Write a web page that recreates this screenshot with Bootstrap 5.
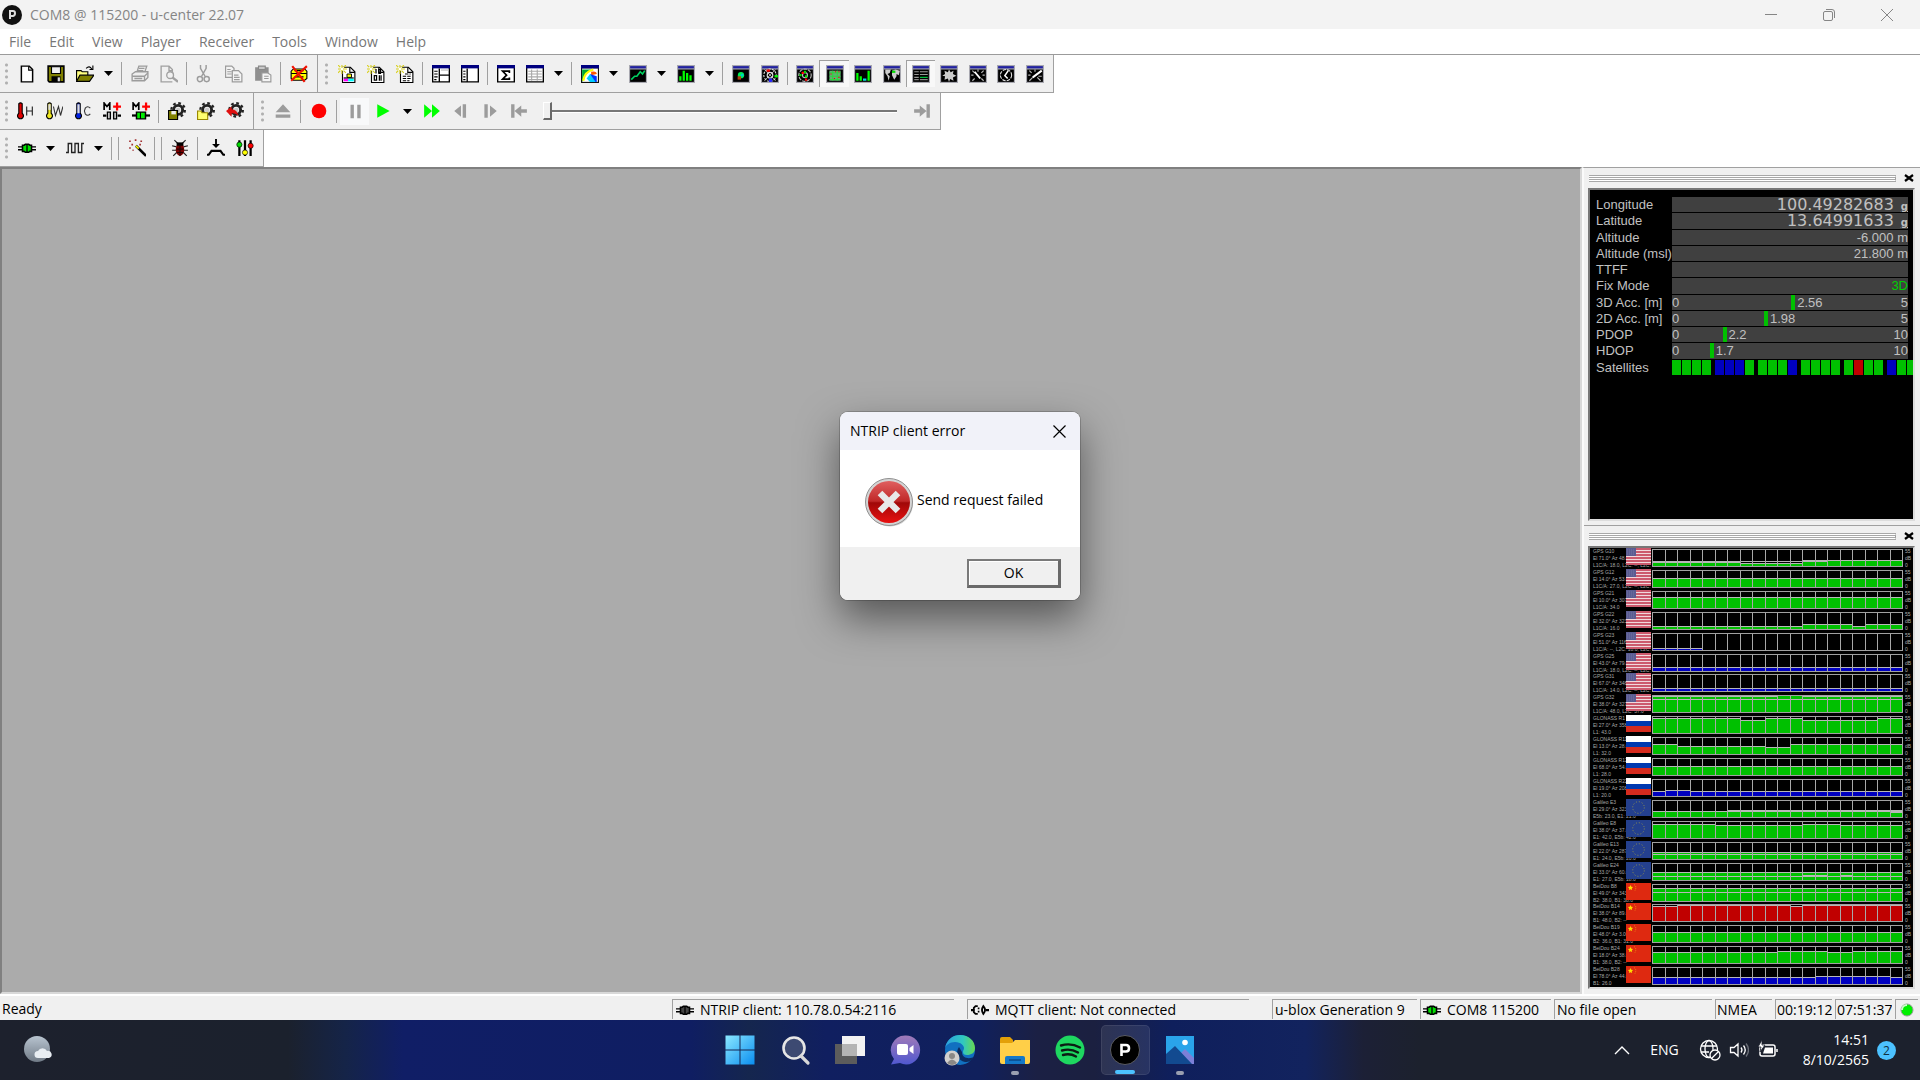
<!DOCTYPE html>
<html lang="en">
<head>
<meta charset="utf-8">
<meta name="viewport" content="width=device-width, initial-scale=1">
<title>COM8 @ 115200 - u-center 22.07</title>
<link href="https://cdn.jsdelivr.net/npm/bootstrap@5.3.0/dist/css/bootstrap.min.css" rel="stylesheet">
<style>
  body { font-family: "Open Sans", "Noto Sans", sans-serif; font-size: 14px; line-height: 20px; color: #000; background: #fff; }
  button { font: inherit; color: inherit; }
  svg { display: block; flex: none; }
  .title-strip { height: 29px; background: #f3f3f3; color: #858585; padding-left: 2px; }
  .win-btn { width: 58px; height: 29px; border: 0; background: none; color: #858585; display: flex; align-items: center; justify-content: center; padding: 0; }
  .menu-strip { height: 25px; padding-left: 9px; gap: 18px; }
  .menu-strip a { color: #777; text-decoration: none; }

  .bars { border-top: 1px solid #9b9b9b; }
  .bar-group { background: #f0f0f0; border-right: 1px solid #a0a0a0; border-bottom: 1px solid #a0a0a0; height: 37px; padding-right: 4px; }
  .bar-main .bar-group { height: 38px; }
  .grip { width: 3px; height: 24px; margin-left: 5px; margin-right: 4px; background: radial-gradient(circle, #b0b0b0 1px, transparent 2px) 0 0 / 3px 6px; }
  .grip-near { margin-right: 2px; }
  .grip-far { margin-left: 7px; }
  .tool { width: 29px; height: 27px; padding: 0; border: 0; background: none; display: flex; align-items: center; justify-content: center; }
  .tool.drop { width: 19px; }
  .tool.pressed { background: #f8f8f8; border-top: 1px solid #a0a0a0; border-left: 1px solid #a0a0a0; }
  .tool svg, .stat svg { width: 18px; height: 18px; }
  .tool.drop svg { width: 9px; height: 5px; }
  .split { width: 1px; height: 23px; background: #a0a0a0; margin: 0 3px; }
  .docks { width: 258px; }
  .docks .tool { flex: 1 1 0; }
  .seek { width: 374px; padding: 0 10px 0 10px; }
  .seek input { width: 100%; height: 20px; appearance: none; background: none; margin: 0; display: block; }
  .seek input::-webkit-slider-runnable-track { height: 3px; background: #777; border-bottom: 1px solid #fff; }
  .seek input::-webkit-slider-thumb { appearance: none; width: 9px; height: 18px; margin-top: -8px; background: #f0f0f0; border: 1px solid #fff; border-right: 2px solid #696969; border-bottom: 2px solid #696969; }

  .main-area { min-height: 0; }
  .workspace { background: #ababab; border: 2px solid #808080; border-right-color: #d8d8d8; border-bottom-color: #d8d8d8; }
  .side { width: 338px; background: #f0f0f0; border-left: 2px solid #fafafa; border-top: 1px solid #a0a0a0; }
  .dock-head { height: 20px; padding-left: 5px; padding-right: 3px; }
  .dock-grip { height: 7px; border-top: 3px double #a8a8a8; border-bottom: 3px double #a8a8a8; border-right: 1px solid #a0a0a0; background: #fff; }
  .dock-close { width: 17px; height: 17px; border: 0; background: none; padding: 0; display: flex; align-items: center; justify-content: center; }
  .screen { background: #000; border: 2px solid #777; border-right-color: #ddd; border-bottom-color: #ddd; margin-left: 4px; margin-right: 5px; overflow: hidden; }
  .screen-data { height: 333px; }
  .dock-line { border-bottom: 1px solid #a0a0a0; }

  .readings { display: grid; grid-template-columns: 76px 1fr; grid-template-rows: repeat(11, minmax(0, 1fr)); height: 179px; margin: 7px 0 0 6px; font-family: "Liberation Sans", Arial, sans-serif; font-size: 13px; line-height: 15px; color: #c0c0c0; }
  .reading-name, .reading { white-space: nowrap; }
  .reading { background: #404040; margin-bottom: 1px; margin-right: 5px; text-align: right; position: relative; }
  .wide-num { font-family: "DejaVu Sans", Verdana, sans-serif; font-size: 16px; }
  .wide-num b { font-size: 10px; line-height: 10px; margin-left: 7px; text-decoration: underline; }
  .fixed-3d { color: #00d000; }
  .mark-pos { position: absolute; top: 0; border-left: 4px solid #00c000; padding-left: 2px; height: 15px; }
  .sat-strip { display: flex; gap: 4px; margin-bottom: 1px; overflow: hidden; }
  .sat-strip span { display: flex; gap: 1px; flex: none; }
  .sat-strip i { width: 9px; background: #00c000; }
  .sat-strip i.used-b { background: #0000c0; }
  .sat-strip i.used-r { background: #c00000; }

  .signals { display: flex; flex-direction: column; height: 439px; }
  .sig { flex: 1 1 0; min-height: 0; display: flex; }
  .sig-text { width: 33px; flex: none; margin-left: 3px; font: 5px/7px "Liberation Sans", Arial, sans-serif; color: #a8a8a8; white-space: nowrap; }
  .sig-flag { width: 25px; height: 17px; margin-right: 1px; position: relative; }
  .sig-plot { height: 18px; width: 251px; margin-top: 1px; position: relative; background: #000; }
  .sig-unit { width: 9px; flex: none; padding-left: 2px; font: 5px/7px "Liberation Sans", Arial, sans-serif; color: #b0b0b0; }

  .status { height: 26px; background: #f0f0f0; border-top: 2px solid #fff; gap: 3px; padding: 3px 2px 1px; }
  .stat { height: 20px; border-top: 1px solid #a0a0a0; border-left: 1px solid #a0a0a0; padding-left: 3px; display: flex; align-items: center; gap: 6px; white-space: nowrap; overflow: hidden; }
  .stat-client { width: 282px; margin-right: 10px; }
  .stat-gen { width: 145px; margin-left: 10px; padding-left: 2px; }
  .stat-port { width: 131px; padding-left: 2px; }
  .stat-file { width: 158px; padding-left: 2px; }
  .stat-time { width: 57px; padding-left: 1px; }
  .stat-led { width: 23px; padding-left: 2px; }

  .taskbar { height: 60px; display: grid; grid-template-columns: 1fr auto 1fr; align-items: center; color: #fff;
    background: linear-gradient(90deg, #1d212d 0, #1b212d 15%, #152448 18%, #101e66 21%, #0f1e62 36%, #15264e 39%, #101f60 43%, #10205c 51%, #1b2044 54%, #1b2040 57%, #0f1f5c 61%, #12235e 68%, #1c2036 71%, #1c212d 74%, #1c212d 100%); }
  .app { width: 55px; height: 52px; border: 0; background: none; padding: 0; display: flex; align-items: center; justify-content: center; position: relative; }
  .app svg { width: 32px; height: 32px; }
  .app.weather { width: 75px; }
  .app.active { width: 49px; height: 50px; margin: 0 3px; background: rgba(255,255,255,.09); border: 1px solid rgba(255,255,255,.08); border-radius: 5px; }
  .app.running::after { content: ""; position: absolute; bottom: 1px; width: 8px; height: 4px; border-radius: 2px; background: #9a9fb0; }
  .app.active::after { bottom: 0; width: 20px; background: #4cc2ff; }
  .tray { padding-right: 24px; }
  .tray button { border: 0; background: none; padding: 0; color: #fff; margin-right: 20px; }
  .clock { text-align: right; margin-left: 4px; }
  .notice { width: 19px; height: 19px; border-radius: 50%; background: #4cc2ff; color: #103040; font-size: 12px; line-height: 19px; text-align: center; }

  .msgbox { top: 412px; width: 240px; border-radius: 8px; overflow: hidden; background: #fff; box-shadow: 0 0 0 1px rgba(0,0,0,.18), 0 18px 40px rgba(0,0,0,.5); z-index: 5; }
  .msg-title { height: 38px; background: #f1f2f9; padding-left: 10px; }
  .msg-title .win-btn { width: 42px; }
  .msg-main { height: 97px; padding: 7px 0 0 24px; gap: 3px; }
  .msg-main span { padding-bottom: 4px; }
  .msg-foot { background: #f0f0f0; height: 53px; padding-right: 19px; }
  .ok-btn { width: 94px; height: 29px; border: 2px solid #7a7a7a; border-right: 3px solid #696969; border-bottom: 3px solid #696969; background: #f0f0f0; box-shadow: inset 1px 1px #fff; padding: 0; }
</style>
</head>
<body>

<svg width="0" height="0" class="position-absolute" aria-hidden="true">
  <defs>
    <symbol id="caret" viewBox="0 0 9 5"><path d="M0 0h9L4.500 5z"/></symbol>
    <symbol id="new" viewBox="0 0 16 16"><path d="M3 1h7l3 3v11H3z" fill="#fff" stroke="#000" stroke-width="1.300"/><path d="M9.500 1v3.500H13" fill="none" stroke="#000"/></symbol>
    <symbol id="save" viewBox="0 0 16 16"><path d="M1 1h14v14H2l-1-1z" fill="#808000" stroke="#000" stroke-width="1.400"/><path d="M4 1.500h8v6H4z" fill="#f0f0f0" stroke="#000"/><path d="M4 10h8v5H4z"/><path d="M9.500 11h2v3.500h-2z" fill="#ddd"/></symbol>
    <symbol id="open" viewBox="0 0 16 16"><path d="M.5 14V5h4l1 1h5v3" fill="#ffff80" stroke="#000"/><path d="M.5 14.500 3.500 9H16l-4 5.500z" fill="#808000" stroke="#000"/><path d="M9 3q3-3 5 .5M15 .5V4h-3" fill="none" stroke="#000"/></symbol>
    <symbol id="print" viewBox="0 0 16 16"><g fill="#eee" stroke="#9c9c9c" stroke-width="1.200"><path d="M5 7 7 1h7l-2 6z"/><path d="M1 8l3-2h11v5l-3 3H1z"/><path d="M1 10h11l3-3M12 10v4M3 12h7M7 3h5M6 5h5"/></g></symbol>
    <symbol id="preview" viewBox="0 0 16 16"><g fill="none" stroke="#a0a0a0" stroke-width="1.200"><path d="M11 15H1V1h7l3 3v3M8 1v4h3"/><circle cx="9" cy="9" r="3"/><path d="m11 11 5 4" stroke-width="2.200"/></g></symbol>
    <symbol id="cut" viewBox="0 0 16 16"><g fill="none" stroke="#9c9c9c" stroke-width="1.300"><path d="M4 0v3l4 7M9 0v3L5 10"/><circle cx="3.500" cy="12.500" r="2.300"/><circle cx="9.500" cy="12.500" r="2.300"/></g></symbol>
    <symbol id="copy" viewBox="0 0 16 16"><g fill="#f4f4f4" stroke="#9c9c9c" stroke-width="1.100"><path d="M.5 1H6l2 2v8H.5z"/><path d="M6.500 5H12l3 3v7H6.500z"/><path d="M2 4h3M2 6h4M2 8h4M8 9h4M8 11h5M8 13h5"/></g></symbol>
    <symbol id="paste" viewBox="0 0 16 16"><path d="M1 2h12v12H1z" fill="#8f8f8f"/><path d="M4 1h6v3H4z" fill="#c8c8c8" stroke="#888"/><path d="M7 7h5l3 2v6H7z" fill="#f4f4f4" stroke="#999"/><path d="M9 10h4M9 12h4" stroke="#999"/></symbol>
    <symbol id="nomsg" viewBox="0 0 16 16"><path d="M3 3.500h10l2 2V12l-2 1.500H3L1 12V5.500z" fill="#ff0" stroke="#000"/><path d="M1 7.500h14M4 5h8M4 10.500h8" stroke="#000"/><path d="M2 1l11 14M15 1 1 14" stroke="#f01000" stroke-width="1.900"/></symbol>
    <symbol id="page" viewBox="0 0 16 16"><path d="M4 2h7l4 4v9.500H4z" fill="#fff" stroke="#000"/><path d="M10.500 2v4.500H15" fill="none" stroke="#000"/><path d="M0 0l7 7M7 0 0 7M3.500-1v9M-1 3.500h9" stroke="#d8d020"/><path d="M2 2l3 3M5 2 2 5" stroke="#fff"/></symbol>
    <symbol id="new1" viewBox="0 0 16 16"><use href="#page"/><path d="M8 8h4v3H8z" fill="#ff0" stroke="#000" stroke-width=".8"/><path d="M5 12h4v2.500H5z" fill="#f0f"/><path d="M9 12h5v2.500H9z" fill="#0ff"/><path d="M5 11.500h9" stroke="#000"/></symbol>
    <symbol id="new2" viewBox="0 0 16 16"><use href="#page"/><path d="M8 3.500v4M10.500 4h1.500v3.500h-1.500zM6.500 9.500h2v4h-2zM11 9v5M12.500 9v5" fill="none" stroke="#000" stroke-width="1.100"/></symbol>
    <symbol id="new3" viewBox="0 0 16 16"><use href="#page"/><path d="M8 8h5M6 10h8M6 12h3M10 12h3M6 14h6" stroke="#000" stroke-dasharray="3 1"/></symbol>
    <symbol id="pane" viewBox="0 0 16 16"><path d="M.6 1h14.800v14H.6z" fill="#fff" stroke="#000" stroke-width="1.200"/><path d="M0 0h16v3H0z" fill="#000080"/></symbol>
    <symbol id="split1" viewBox="0 0 16 16"><use href="#pane"/><path d="M6.500 3v12M6.500 9H16" stroke="#000" stroke-width="1.200"/><path d="M2 5.500h3M2 8h3M2 10.500h3M2 13h2" stroke="#000"/><path d="M8 4.500h7" stroke="#bbb"/></symbol>
    <symbol id="split2" viewBox="0 0 16 16"><use href="#pane"/><path d="M5.500 3v12" stroke="#000" stroke-width="1.200"/><path d="M2 5.500h2M2 8h2M2 10.500h2M2 13h2" stroke="#000"/></symbol>
    <symbol id="sigma" viewBox="0 0 16 16"><use href="#pane"/><path d="M11 7V5.500H5L8.500 9 5 12.500h6V11" fill="none" stroke="#000" stroke-width="1.500"/></symbol>
    <symbol id="grid" viewBox="0 0 16 16"><use href="#pane"/><path d="M2 5.500h12M2 8h12M2 10.500h12M2 13h12M5 4v10M10 4v10" stroke="#aaa"/></symbol>
    <symbol id="dark" viewBox="0 0 16 16"><path d="M0 0h16v16H0z" fill="#a8a8b0"/><path d="M1 1h14v2H1z" fill="#2222a0"/><path d="M1 4h14v11H1z"/></symbol>
    <symbol id="map" viewBox="0 0 16 16"><path d="M0 0h16v16H0z" fill="#111"/><path d="M1 3h14v12H1z" fill="#fff"/><path d="M0 0h16v3H0z" fill="#000080"/><path d="M1 4h8L4 9l-3 6z" fill="#0a3"/><path d="M2 14q1-8 9-10" fill="none" stroke="#ff0" stroke-width="2"/><path d="M9 6q5-1 5 2l-5 1z" fill="#f50"/><path d="M8 8l6 2v5h-4z" fill="#03f"/><path d="M5 12l3-4 5 7H8z" fill="#0cf"/></symbol>
    <symbol id="line" viewBox="0 0 16 16"><use href="#dark"/><path d="M2 13l3-3h2l3-4 2 2 2-3" fill="none" stroke="#00d060" stroke-width="1.400"/></symbol>
    <symbol id="hist" viewBox="0 0 16 16"><use href="#dark"/><path d="M2 14v-4h2v4zM5 14V5h2v9zM8 14V7h2v7zM11 14V9h2v5z" fill="#0f0"/></symbol>
    <symbol id="cam" viewBox="0 0 16 16"><use href="#dark"/><circle cx="8" cy="9" r="2.800" fill="#0e5"/><path d="M5 10h3v3H5z" fill="#b04010"/><circle cx="9" cy="9" r="1.200" fill="#0cc"/></symbol>
    <symbol id="radar" viewBox="0 0 16 16"><use href="#dark"/><g fill="none" stroke="#ddd"><circle cx="8" cy="9" r="5.500" stroke-dasharray="2 1"/><circle cx="8" cy="9" r="2.500"/><path d="M3 4l10 10M13 4 3 14" stroke-width=".7"/></g><path d="M5 4h3v2H5z" fill="#f00"/><path d="M7 12h3v3H7z" fill="#22f"/><path d="M12 9h3v2h-3z" fill="#0f0"/></symbol>
    <symbol id="radar2" viewBox="0 0 16 16"><use href="#dark"/><g fill="none" stroke="#bbb"><circle cx="8" cy="9" r="5.500" stroke-dasharray="3 1"/><circle cx="8" cy="9" r="2.200"/></g><path d="M7 5h2v2H7zM3 8h2v2H3zM8 9h2v2H8z" fill="#0d0"/><path d="M5 6h2v2H5zM8 12h2v2H8z" fill="#f00"/></symbol>
    <symbol id="matrix" viewBox="0 0 16 16"><use href="#dark"/><path d="M3 5h10v9H3z" fill="#6a7"/><path d="M3 7h10M3 10h10M3 13h10M6 5v9M10 5v9" stroke="#2d3" stroke-width=".8"/><path d="M4 8h1M8 6h1M11 11h1M7 12h1M11 6h1" stroke="#e00"/></symbol>
    <symbol id="hist2" viewBox="0 0 16 16"><use href="#dark"/><path d="M2 14V7h2v7zM5 14v-4h2v4zM12 14V5h2v9z" fill="#0f0"/><path d="M8 14v-2h3v2z" fill="#0dd"/></symbol>
    <symbol id="world" viewBox="0 0 16 16"><use href="#dark"/><path d="M2 4h5l-1 3-2 1 2 2-1 4-1-4-2-3zM8 5l3-1 4 1-1 4-2-1v2l-2 3-2-4z" fill="#ccc"/><path d="M8 5h3v2H8z" fill="#0d0"/></symbol>
    <symbol id="lines" viewBox="0 0 16 16"><use href="#dark"/><path d="M2 6h4M7 6h7M2 8.500h4M7 8.500h7M2 11h4" stroke="#999" stroke-width=".9"/><path d="M7 11h7" stroke="#0c4"/><path d="M2 13h4M7 13h7" stroke="#888" stroke-width=".9"/></symbol>
    <symbol id="rose" viewBox="0 0 16 16"><use href="#dark"/><path d="m8 4 1.500 2.500L12 5l-.5 3 3 1.500-3 1.500.5 3-3-1.500L8 15l-1-3-3 1 .5-3L2 9.500 4.500 8 4 5l3 1.500z" fill="#ccc"/></symbol>
    <symbol id="gauge" viewBox="0 0 16 16"><use href="#dark"/><path d="M3 5l2 2M13 5l-2 2M8 4v2M2 9h2M14 9h-2M3 14l2-2M13 14l-2-2" stroke="#bbb"/><path d="m5 6 5 6" stroke="#fff" stroke-width="1.700"/></symbol>
    <symbol id="watch" viewBox="0 0 16 16"><use href="#dark"/><circle cx="8" cy="9" r="5" fill="none" stroke="#ddd" stroke-dasharray="3 1"/><path d="M10 5 7 9.500 9.500 12" fill="none" stroke="#fff" stroke-width="1.400"/></symbol>
    <symbol id="gauge2" viewBox="0 0 16 16"><use href="#dark"/><path d="M3 5l2 2M8 4v2M2 9h2M14 10h-3M3 14l3-3M13 14l-3-3" stroke="#bbb"/><path d="M14 5 6 11" stroke="#fff" stroke-width="1.700"/></symbol>
    <symbol id="therm" viewBox="0 0 16 16"><path d="M2.500 1.500q1.500-1.500 3 0V10q2 2 .5 4-2 1.800-4 0-1.500-2 .5-4z" fill="currentColor" stroke="#000"/></symbol>
    <symbol id="th" viewBox="0 0 16 16"><use href="#therm" color="#e00000"/><path d="M9.500 4v8M14.500 4v8M9.500 8h5" stroke="#222"/></symbol>
    <symbol id="tw" viewBox="0 0 16 16"><use href="#therm" color="#f0e820"/><path d="M3 2h2v5H3z" fill="#ddd"/><path d="m7.500 4 1.800 8L12 4l1.800 8L16 4" fill="none" stroke="#333"/></symbol>
    <symbol id="tc" viewBox="0 0 16 16"><use href="#therm" color="#0020e0"/><path d="M3 2h2v8H3z" fill="#ddd"/><path d="M14.500 5.500q-2.500-2.500-4.500 0-1.500 2.500 0 5 2 2.500 4.500 0" fill="none" stroke="#333"/></symbol>
    <symbol id="mplus" viewBox="0 0 16 16"><path d="M1 7V1l2.500 3L6 1v6" fill="none" stroke="#000" stroke-width="1.500"/><path d="M9 4h7M12.500.5v7" stroke="#f00" stroke-width="2"/></symbol>
    <symbol id="m1" viewBox="0 0 16 16"><use href="#mplus"/><path d="M0 12h3M13 12h3" stroke="#000" stroke-width="2"/><path d="M6.500 9H4v6h2.500zM9.500 9H12v6H9.500z" fill="#fff" stroke="#000" stroke-width="1.300"/></symbol>
    <symbol id="m2" viewBox="0 0 16 16"><use href="#mplus"/><path d="M0 12h16" stroke="#000" stroke-width="2"/><path d="M4 9h8v6H4z" fill="#0e0" stroke="#000" stroke-width="1.300"/><path d="M7.500 9v6" stroke="#000"/></symbol>
    <symbol id="cog" viewBox="0 0 16 16"><circle cx="9" cy="7" r="4" fill="none" stroke="#222" stroke-width="2.600"/><circle cx="9" cy="7" r="6" fill="none" stroke="#222" stroke-width="2" stroke-dasharray="2.400 2.300"/><circle cx="9" cy="7" r="2" fill="#ccc"/></symbol>
    <symbol id="c1" viewBox="0 0 16 16"><use href="#cog"/><path d="M.5 7.500h8v8h-8z" fill="#808000" stroke="#000"/><path d="M3 8h4v3H3z" fill="#eee"/></symbol>
    <symbol id="c2" viewBox="0 0 16 16"><use href="#cog"/><path d="M.5 8h3l1 1.500h5v6h-9z" fill="#ffff70" stroke="#998800"/></symbol>
    <symbol id="c3" viewBox="0 0 16 16"><use href="#cog"/><path d="M0 8l5-4v2.500q5 0 6 6-2-3-6-2.500V13z" fill="#e01010"/></symbol>
    <symbol id="eject" viewBox="0 0 16 16"><path d="M8 2l6.500 7h-13zM1.500 11h13v3h-13z" fill="#9c9c9c"/></symbol>
    <symbol id="rec" viewBox="0 0 16 16"><circle cx="8" cy="8" r="6.500" fill="#f00"/></symbol>
    <symbol id="pause" viewBox="0 0 16 16"><path d="M4 2.500h3v12H4zM10 2.500h3v12h-3z" fill="#9c9c9c"/></symbol>
    <symbol id="play" viewBox="0 0 16 16"><path d="M2 2l11 6-11 6z" fill="#0f0"/></symbol>
    <symbol id="ff" viewBox="0 0 16 16"><path d="M1 2l7 6-7 6zM8 2l7 6-7 6z" fill="#0f0"/></symbol>
    <symbol id="sb" viewBox="0 0 16 16"><path d="M8 3v10L2 8zM9.500 2h3v12h-3z" fill="#9c9c9c"/></symbol>
    <symbol id="sf" viewBox="0 0 16 16"><path d="M8 3v10l6-5zM3 2h3v12H3z" fill="#9c9c9c"/></symbol>
    <symbol id="first" viewBox="0 0 16 16"><path d="M1 2h3v12H1zM4 8l6-5v3.500h5v3h-5V13z" fill="#9c9c9c"/></symbol>
    <symbol id="last" viewBox="0 0 16 16"><path d="M12 2h3v12h-3zM12 8 6 3v3.500H1v3h5V13z" fill="#9c9c9c"/></symbol>
    <symbol id="plug" viewBox="0 0 16 16"><path d="M0 7h4M0 9.500h4M12 7h4M12 9.500h4" stroke="#000" stroke-width="1.300"/><path d="M4 5.500h1.500l1-.8h3l1 .8H12v5.500h-1.500l-1 .8h-3l-1-.8H4z" fill="currentColor" stroke="#000" stroke-width="1.400"/><path d="M8 5v6.500" stroke="#000" stroke-width="1.200"/></symbol>
    <symbol id="unplug" viewBox="0 0 16 16"><path d="M0 8h3M13 8h3" stroke="#000" stroke-width="2"/><path d="M6 4.500H4L2.500 6v4L4 11.500h2M6 6.500h1.500M6 9.500h1.500" fill="none" stroke="#000" stroke-width="1.600"/><path d="M11 4.500q3 3.500 0 7-2.500-3.500 0-7z" fill="none" stroke="#000" stroke-width="1.600"/></symbol>
    <symbol id="wave" viewBox="0 0 16 16"><path d="M0 12h2V4h3v8h3V4h3v8h3V4h2" fill="none" stroke="#222" stroke-width="1.200"/></symbol>
    <symbol id="wand" viewBox="0 0 16 16"><path d="m7 6 9 9" stroke="#000" stroke-width="2.200"/><path d="m7 6 2.500 2.500" stroke="#ff0" stroke-width="1.500"/><path d="M1 2h1.500M6 1h1.500M11 2h1.500M3 5h1.500M1 8h1.500M10 5h1.500M4 10h1" stroke="#a03030" stroke-width="1.400"/></symbol>
    <symbol id="bug" viewBox="0 0 16 16"><path d="M3 1l3 3M13 1l-3 3M1 6l4 1M15 6l-4 1M1 10h14M2 15l3-3M14 15l-3-3" stroke="#222"/><ellipse cx="8" cy="9.500" rx="3.800" ry="5.500" fill="#700"/><path d="M5 3h6v3H5z"/><path d="M8 6v9M5 9h6M5 12h6" stroke="#200"/></symbol>
    <symbol id="base" viewBox="0 0 16 16"><path d="M8 0v6" stroke="#000" stroke-width="1.700"/><path d="M4.500 4.500h7L8 8z"/><path d="M0 14h1.500L4 10.500h8l2.500 3.500H16" fill="none" stroke="#000" stroke-width="1.900"/></symbol>
    <symbol id="mixer" viewBox="0 0 16 16"><path d="M3 1v14M8 1v14M13 1v14" stroke="#000" stroke-width="2"/><circle cx="3" cy="5" r="2.300" fill="#0d0" stroke="#000" stroke-width=".6"/><circle cx="8" cy="12" r="2.300" fill="#ff0" stroke="#000" stroke-width=".6"/><circle cx="13" cy="6" r="2.300" fill="#f00" stroke="#000" stroke-width=".6"/></symbol>
    <symbol id="xmark" viewBox="0 0 10 10"><path d="M1 2l8 6M9 2 1 8" stroke="#000" stroke-width="2.200"/></symbol>

    <symbol id="flag-us" viewBox="0 0 25 17" preserveAspectRatio="none"><path d="M0 0h25v17H0z" fill="#f0d8dc"/><path d="M0 1h25M0 4h25M0 7h25M0 10h25M0 13h25M0 16h25" stroke="#c03048" stroke-width="1.400"/><path d="M0 0h10v8H0z" fill="#5a5c92"/><path d="M1 2h8M1 4h8M1 6h8" stroke="#8486b0" stroke-width=".6" stroke-dasharray="1 1"/></symbol>
    <symbol id="flag-ru" viewBox="0 0 25 17" preserveAspectRatio="none"><path d="M0 0h25v6H0z" fill="#fff"/><path d="M0 6h25v5H0z" fill="#0039b0"/><path d="M0 11h25v6H0z" fill="#d52b1e"/></symbol>
    <symbol id="flag-eu" viewBox="0 0 25 17" preserveAspectRatio="none"><path d="M0 0h25v17H0z" fill="#24408e"/><circle cx="12.500" cy="8.500" r="5.800" fill="none" stroke="#8f914e" stroke-dasharray="1 2"/></symbol>
    <symbol id="flag-cn" viewBox="0 0 25 17" preserveAspectRatio="none"><path d="M0 0h25v17H0z" fill="#de2910"/><path d="m4.500 2 .8 1.700 1.800.2-1.300 1.300.3 1.900-1.600-.9-1.600.9.3-1.900L1.900 3.900l1.800-.2z" fill="#ffde00"/><path d="M8 1.500q3 2 1 6" fill="none" stroke="#f39010" stroke-dasharray="1 1"/></symbol>
  </defs>
</svg>

<div class="d-flex flex-column vh-100 position-relative overflow-hidden">

  <header class="title-strip d-flex align-items-center">
    <svg width="20" height="20" viewBox="0 0 20 20" aria-hidden="true"><circle cx="10" cy="10" r="10" fill="#111"/><path d="M8 14V6h3q2 0 2 2.300T11 11H8" fill="none" stroke="#ddd" stroke-width="2"/></svg>
    <span class="ms-2 flex-grow-1">COM8 @ 115200 - u-center 22.07</span>
    <button class="win-btn" aria-label="Minimize"><svg width="12" height="12" viewBox="0 0 12 12"><path d="M0 5.500h12" stroke="currentColor"/></svg></button>
    <button class="win-btn" aria-label="Restore"><svg width="12" height="12" viewBox="0 0 12 12" fill="none" stroke="currentColor"><rect x=".5" y="2.500" width="9" height="9" rx="1.500"/><path d="M3 .5h6q2.500 0 2.500 2.500v6"/></svg></button>
    <button class="win-btn me-1" aria-label="Close"><svg width="12" height="12" viewBox="0 0 12 12" stroke="currentColor"><path d="m0 0 12 12M12 0 0 12"/></svg></button>
  </header>

  <nav class="menu-strip d-flex align-items-center" aria-label="Menu">
    <a href="#">File</a><a href="#">Edit</a><a href="#">View</a><a href="#">Player</a><a href="#">Receiver</a><a href="#">Tools</a><a href="#">Window</a><a href="#">Help</a>
  </nav>

  <div class="bars">
    <div class="bar-main d-flex">
      <div class="bar-group d-flex align-items-center">
        <span class="grip"></span>
        <button class="tool" aria-label="New"><svg><use href="#new"/></svg></button>
        <button class="tool" aria-label="Save"><svg><use href="#save"/></svg></button>
        <button class="tool" aria-label="Open"><svg><use href="#open"/></svg></button>
        <button class="tool drop" aria-label="Recent files"><svg><use href="#caret"/></svg></button>
        <span class="split"></span>
        <button class="tool" aria-label="Print"><svg><use href="#print"/></svg></button>
        <button class="tool" aria-label="Print preview"><svg><use href="#preview"/></svg></button>
        <span class="split"></span>
        <button class="tool" aria-label="Cut"><svg><use href="#cut"/></svg></button>
        <button class="tool" aria-label="Copy"><svg><use href="#copy"/></svg></button>
        <button class="tool" aria-label="Paste"><svg><use href="#paste"/></svg></button>
        <span class="split"></span>
        <button class="tool" aria-label="Delete messages"><svg><use href="#nomsg"/></svg></button>
      </div>
      <div class="bar-group d-flex align-items-center">
        <span class="grip grip-far"></span>
        <button class="tool" aria-label="New packet view"><svg><use href="#new1"/></svg></button>
        <button class="tool" aria-label="New binary view"><svg><use href="#new2"/></svg></button>
        <button class="tool" aria-label="New text view"><svg><use href="#new3"/></svg></button>
        <span class="split"></span>
        <button class="tool" aria-label="Messages view"><svg><use href="#split1"/></svg></button>
        <button class="tool" aria-label="Configuration view"><svg><use href="#split2"/></svg></button>
        <span class="split"></span>
        <button class="tool" aria-label="Statistic view"><svg><use href="#sigma"/></svg></button>
        <button class="tool" aria-label="Table view"><svg><use href="#grid"/></svg></button>
        <button class="tool drop" aria-label="Table views"><svg><use href="#caret"/></svg></button>
        <span class="split"></span>
        <button class="tool" aria-label="Map view"><svg><use href="#map"/></svg></button>
        <button class="tool drop" aria-label="Map views"><svg><use href="#caret"/></svg></button>
        <button class="tool" aria-label="Chart view"><svg><use href="#line"/></svg></button>
        <button class="tool drop" aria-label="Chart views"><svg><use href="#caret"/></svg></button>
        <button class="tool" aria-label="Histogram view"><svg><use href="#hist"/></svg></button>
        <button class="tool drop" aria-label="Histogram views"><svg><use href="#caret"/></svg></button>
        <span class="split"></span>
        <button class="tool" aria-label="Camera view"><svg><use href="#cam"/></svg></button>
        <button class="tool" aria-label="Deviation map"><svg><use href="#radar"/></svg></button>
        <span class="split"></span>
        <div class="docks d-flex">
          <button class="tool" aria-label="Sky view"><svg><use href="#radar2"/></svg></button>
          <button class="tool pressed" aria-label="Satellite signals" aria-pressed="true"><svg><use href="#matrix"/></svg></button>
          <button class="tool" aria-label="Satellite levels"><svg><use href="#hist2"/></svg></button>
          <button class="tool" aria-label="World map"><svg><use href="#world"/></svg></button>
          <button class="tool pressed" aria-label="Data" aria-pressed="true"><svg><use href="#lines"/></svg></button>
          <button class="tool" aria-label="Compass"><svg><use href="#rose"/></svg></button>
          <button class="tool" aria-label="Speed meter"><svg><use href="#gauge"/></svg></button>
          <button class="tool" aria-label="Clock"><svg><use href="#watch"/></svg></button>
          <button class="tool" aria-label="Altitude meter"><svg><use href="#gauge2"/></svg></button>
        </div>
      </div>
    </div>

    <div class="d-flex">
      <div class="bar-group d-flex align-items-center">
        <span class="grip grip-near"></span>
        <button class="tool" aria-label="Hotstart"><svg><use href="#th"/></svg></button>
        <button class="tool" aria-label="Warmstart"><svg><use href="#tw"/></svg></button>
        <button class="tool" aria-label="Coldstart"><svg><use href="#tc"/></svg></button>
        <button class="tool" aria-label="Aiding off"><svg><use href="#m1"/></svg></button>
        <button class="tool" aria-label="Aiding on"><svg><use href="#m2"/></svg></button>
        <span class="split"></span>
        <button class="tool" aria-label="Save configuration"><svg><use href="#c1"/></svg></button>
        <button class="tool" aria-label="Load configuration"><svg><use href="#c2"/></svg></button>
        <button class="tool" aria-label="Revert configuration"><svg><use href="#c3"/></svg></button>
      </div>
      <div class="bar-group d-flex align-items-center">
        <span class="grip grip-far"></span>
        <button class="tool" aria-label="Eject"><svg><use href="#eject"/></svg></button>
        <span class="split"></span>
        <button class="tool" aria-label="Record"><svg><use href="#rec"/></svg></button>
        <span class="split"></span>
        <button class="tool bg-light" aria-label="Pause"><svg><use href="#pause"/></svg></button>
        <button class="tool" aria-label="Play"><svg><use href="#play"/></svg></button>
        <button class="tool drop" aria-label="Play speed"><svg><use href="#caret"/></svg></button>
        <button class="tool" aria-label="Fast forward"><svg><use href="#ff"/></svg></button>
        <button class="tool" aria-label="Step back"><svg><use href="#sb"/></svg></button>
        <button class="tool" aria-label="Step forward"><svg><use href="#sf"/></svg></button>
        <button class="tool" aria-label="Go to start"><svg><use href="#first"/></svg></button>
        <div class="seek"><input type="range" min="0" max="100" value="0" aria-label="Position"></div>
        <button class="tool" aria-label="Go to end"><svg><use href="#last"/></svg></button>
      </div>
    </div>

    <div class="d-flex">
      <div class="bar-group d-flex align-items-center">
        <span class="grip"></span>
        <button class="tool" aria-label="Connect"><svg color="#00e000"><use href="#plug"/></svg></button>
        <button class="tool drop" aria-label="Ports"><svg><use href="#caret"/></svg></button>
        <button class="tool" aria-label="Baudrate"><svg><use href="#wave"/></svg></button>
        <button class="tool drop" aria-label="Baudrates"><svg><use href="#caret"/></svg></button>
        <span class="split"></span><span class="split"></span>
        <button class="tool" aria-label="Autobaud"><svg><use href="#wand"/></svg></button>
        <span class="split"></span><span class="split"></span>
        <button class="tool" aria-label="Debug"><svg><use href="#bug"/></svg></button>
        <span class="split"></span>
        <button class="tool" aria-label="Firmware update"><svg><use href="#base"/></svg></button>
        <button class="tool" aria-label="Settings"><svg><use href="#mixer"/></svg></button>
      </div>
    </div>
  </div>

  <main class="main-area d-flex flex-grow-1">
    <section class="workspace flex-grow-1" aria-label="Workspace"></section>
    <aside class="side">
      <div class="dock-head d-flex align-items-center">
        <div class="dock-grip flex-grow-1"></div>
        <button class="dock-close ms-1" aria-label="Close data panel"><svg width="10" height="10"><use href="#xmark"/></svg></button>
      </div>
      <div class="screen screen-data">
        <div class="readings">
          <span class="reading-name">Longitude</span><span class="reading wide-num">100.49282683<b>g</b></span>
          <span class="reading-name">Latitude</span><span class="reading wide-num">13.64991633<b>g</b></span>
          <span class="reading-name">Altitude</span><span class="reading">-6.000 m</span>
          <span class="reading-name">Altitude (msl)</span><span class="reading">21.800 m</span>
          <span class="reading-name">TTFF</span><span class="reading"></span>
          <span class="reading-name">Fix Mode</span><span class="reading fixed-3d">3D</span>
          <span class="reading-name">3D Acc. [m]</span><span class="reading d-flex justify-content-between"><span>0</span><span class="mark-pos" style="left:50.5%">2.56</span><span>5</span></span>
          <span class="reading-name">2D Acc. [m]</span><span class="reading d-flex justify-content-between"><span>0</span><span class="mark-pos" style="left:39%">1.98</span><span>5</span></span>
          <span class="reading-name">PDOP</span><span class="reading d-flex justify-content-between"><span>0</span><span class="mark-pos" style="left:21.4%">2.2</span><span>10</span></span>
          <span class="reading-name">HDOP</span><span class="reading d-flex justify-content-between"><span>0</span><span class="mark-pos" style="left:16%">1.7</span><span>10</span></span>
          <span class="reading-name">Satellites</span>
          <div class="sat-strip">
            <span><i></i><i></i><i></i><i></i></span>
            <span><i class="used-b"></i><i class="used-b"></i><i class="used-b"></i><i></i></span>
            <span><i></i><i></i><i></i><i class="used-b"></i></span>
            <span><i></i><i></i><i></i><i></i></span>
            <span><i></i><i class="used-r"></i><i></i><i></i></span>
            <span><i class="used-b"></i><i></i><i></i></span>
          </div>
        </div>
      </div>
      <div class="dock-line pt-1"></div>
      <div class="dock-head d-flex align-items-center">
        <div class="dock-grip flex-grow-1"></div>
        <button class="dock-close ms-1" aria-label="Close signal panel"><svg width="10" height="10"><use href="#xmark"/></svg></button>
      </div>
      <div class="screen"><div class="signals" id="signals"></div></div>
    </aside>
  </main>

  <div class="status d-flex align-items-center">
    <span class="flex-grow-1">Ready</span>
    <div class="stat stat-client"><svg color="#444"><use href="#plug"/></svg>NTRIP client: 110.78.0.54:2116</div>
    <div class="stat stat-client"><svg><use href="#unplug"/></svg>MQTT client: Not connected</div>
    <div class="stat stat-gen">u-blox Generation 9</div>
    <div class="stat stat-port"><svg color="#00e000"><use href="#plug"/></svg>COM8 115200</div>
    <div class="stat stat-file">No file open</div>
    <div class="stat stat-time">NMEA</div>
    <div class="stat stat-time">00:19:12</div>
    <div class="stat stat-time">07:51:37</div>
    <div class="stat stat-led"><svg viewBox="0 0 18 18" aria-label="Receiving"><circle cx="9" cy="9" r="6" fill="#00f000" stroke="#9a9a9a"/><path d="M4 9a5 5 0 0 1 5-5" fill="none" stroke="#c8ffc8" stroke-width="2"/></svg></div>
  </div>

  <footer class="taskbar">
    <button class="app weather" aria-label="Weather"><svg viewBox="0 0 32 32"><defs><linearGradient id="moon" x2="0" y2="1"><stop stop-color="#b8c4d0"/><stop offset="1" stop-color="#707a86"/></linearGradient></defs><circle cx="15" cy="15" r="13" fill="url(#moon)"/><path d="M16 24a3.500 3.500 0 0 1 0-7 5 5 0 0 1 9 0 3.500 3.500 0 0 1 2 7z" fill="#e8edf2"/></svg></button>
    <div class="d-flex align-items-center">
      <button class="app" aria-label="Start"><svg viewBox="0 0 32 32"><defs><linearGradient id="win" x2="1" y2="1"><stop stop-color="#8be8ff"/><stop offset="1" stop-color="#0a8ef0"/></linearGradient></defs><path d="M1.500 1.500h14v14h-14zM16.500 1.500h14v14h-14zM1.500 16.500h14v14h-14zM16.500 16.500h14v14h-14z" fill="url(#win)"/></svg></button>
      <button class="app" aria-label="Search"><svg viewBox="0 0 32 32"><circle cx="15" cy="14" r="10.500" fill="#3d4a72" stroke="#e6e6e6" stroke-width="2.600"/><path d="m22 22 7 7" stroke="#d8d8d8" stroke-width="3.200" stroke-linecap="round"/></svg></button>
      <button class="app" aria-label="Task view"><svg viewBox="0 0 32 32"><path d="M1 10h22v20H1z" fill="#5c5c5c"/><path d="M8 2h23v20H8z" fill="#f2f2f2"/><path d="M8 10h15v12H8z" fill="#b4b4b4"/></svg></button>
      <button class="app" aria-label="Chat"><svg viewBox="0 0 32 32"><defs><linearGradient id="chat" x2="0" y2="1"><stop stop-color="#a07ab8"/><stop offset="1" stop-color="#5058d0"/></linearGradient></defs><path d="M16 1.500a14 14.500 0 1 1-5 27.500l-9 1.500L5 25A14.500 14.500 0 0 1 16 1.500z" fill="url(#chat)"/><rect x="8" y="10" width="11" height="11" rx="2" fill="#fff"/><path d="m20.500 14 4-3v9l-4-3z" fill="#fff"/></svg></button>
      <button class="app" aria-label="Edge"><svg viewBox="0 0 32 32"><defs><linearGradient id="edge"><stop stop-color="#2d9fe0"/><stop offset=".6" stop-color="#30c8c0"/><stop offset="1" stop-color="#68d850"/></linearGradient></defs><circle cx="16" cy="16" r="15" fill="#1170c0"/><path d="M1 14C3 5 9 1 16 1c9 0 15 6 15 13 0 5-4 7-8 7-3 0-4-1-4-3s1-2 1-4-3-6-9-6C6 8 2 11 1 14z" fill="url(#edge)"/><path d="M15 13c-4 5-1 14 6 15 4 0 7-1 9-5-4 2-12 2-12-5z" fill="#0d2c60"/><circle cx="8" cy="24" r="7.500" fill="#d2d0ce"/><circle cx="8" cy="22" r="3" fill="#8a8886"/><path d="M3 29q5-7 10 0-5 4-10 0z" fill="#8a8886"/></svg></button>
      <button class="app running" aria-label="File Explorer"><svg viewBox="0 0 32 32"><path d="M1 5q0-2 2-2h8l3 3v6H1z" fill="#e3a008"/><path d="M1 9h12l3-3h15v22q0 2-2 2H3q-2 0-2-2z" fill="#ffcf48"/><path d="M6 30v-6q0-2 2-2h16q2 0 2 2v6z" fill="#1478c8"/><path d="M10 26h12" stroke="#0a4a88" stroke-width="1.500"/></svg></button>
      <button class="app" aria-label="Spotify"><svg viewBox="0 0 32 32"><circle cx="16" cy="16" r="14.500" fill="#1ed760"/><path d="M7 11.500q10-3 19 2M8 16.500q8.500-2.500 16 2M9 21q7-2 13 1.500" fill="none" stroke="#0c1c14" stroke-width="2.400" stroke-linecap="round"/></svg></button>
      <button class="app running active" aria-label="u-center"><svg viewBox="0 0 32 32"><circle cx="16" cy="16" r="14.500" fill="#000" stroke="#888" stroke-width=".6"/><path d="M12.500 22V11h4.500q3 0 3 3.200T17 17.500h-4" fill="none" stroke="#fff" stroke-width="2.600"/></svg></button>
      <button class="app running" aria-label="Photos"><svg viewBox="0 0 32 32"><path d="M2 2h28v28H2z" fill="#2aa4ea"/><path d="M16 20l5-5 9 9v6H16z" fill="#7c80d8"/><path d="M2 20 11 12l17 18H2z" fill="#124a90"/><circle cx="21" cy="8.500" r="2.800" fill="#fff"/></svg></button>
    </div>
    <div class="tray d-flex align-items-center justify-content-end">
      <button aria-label="Hidden icons"><svg width="16" height="10" viewBox="0 0 16 10" fill="none" stroke="#fff" stroke-width="1.400"><path d="m1 9 7-7 7 7"/></svg></button>
      <button>ENG</button>
      <button class="d-flex align-items-center gap-2" aria-label="Network, volume, battery">
        <svg width="22" height="22" viewBox="0 0 22 22" fill="none" stroke="#fff" stroke-width="1.300"><circle cx="10" cy="10" r="8.500"/><ellipse cx="10" cy="10" rx="4" ry="8.500"/><path d="M2 7h16M2 13h8"/><circle cx="16" cy="16" r="5" fill="#1c212d"/><path d="m12.500 19.500 7-7"/></svg>
        <svg width="20" height="20" viewBox="0 0 20 20" fill="none" stroke="#fff" stroke-width="1.300"><path d="M1.500 7.500H5L9 4v12l-4-3.500H1.500zM12 7.500q2 2.500 0 5M14.500 5.500q3.500 4.500 0 9"/><path d="M17 3.500q5 6.500 0 13" stroke="#6a6e78"/></svg>
        <svg width="22" height="20" viewBox="0 0 22 20" fill="none" stroke="#fff" stroke-width="1.500"><rect x="3" y="5" width="15" height="11" rx="2"/><path d="M20 9v3"/><path d="M8 7.500h8v6H6z" fill="#fff" stroke="none"/><path d="M5 0 1 7h3l-1 5 5-7H5z" fill="#fff" stroke="#1c212d" stroke-width=".8"/></svg>
      </button>
      <div class="clock">14:51<br>8/10/2565</div>
      <div class="notice ms-2">2</div>
    </div>
  </footer>

  <div class="msgbox position-absolute start-50 translate-middle-x" role="alertdialog" aria-labelledby="msgTitle">
    <div class="msg-title d-flex align-items-center justify-content-between">
      <span id="msgTitle">NTRIP client error</span>
      <button class="win-btn" aria-label="Close"><svg width="13" height="13" viewBox="0 0 13 13" stroke="#000" stroke-width="1.200"><path d="m.5.5 12 12M12.500.5l-12 12"/></svg></button>
    </div>
    <div class="msg-main d-flex align-items-center">
      <svg width="50" height="50" viewBox="0 0 50 50" aria-hidden="true"><defs><linearGradient id="err" x2="0" y2="1"><stop stop-color="#e06060"/><stop offset=".48" stop-color="#c02828"/><stop offset=".52" stop-color="#a00808"/><stop offset="1" stop-color="#e81010"/></linearGradient></defs><circle cx="26" cy="26.500" r="23" fill="#000" opacity=".18"/><circle cx="25" cy="25" r="23.500" fill="#d4d4d4" stroke="#909090"/><circle cx="25" cy="25" r="21" fill="url(#err)"/><path d="m16 16 18 18m0-18-18 18" stroke="#e8e8e8" stroke-width="6.500"/></svg>
      <span>Send request failed</span>
    </div>
    <div class="msg-foot d-flex align-items-center justify-content-end"><button class="ok-btn">OK</button></div>
  </div>
</div>

<script src="https://cdn.jsdelivr.net/npm/bootstrap@5.3.0/dist/js/bootstrap.bundle.min.js"></script>
<script>
  // One entry per satellite: flag, text lines, colour, [columns, level] runs, extra level lines [from, to, level]
  const G = '#00c000', B = '#0000c0', R = '#c00000';
  const sats = [
    ['us', 'GPS G10', 'El 71.0° Az 48.0', 'L1C/A: 18.0, L2C: --, L2C: --', G, [[7,4],[5,3],[8,6]], [[0,7,5],[7,14,5]]],
    ['us', 'GPS G12', 'El 14.0° Az 53.0', 'L1C/A: 27.0, L2C: --, L2C: --', G, [[20,9]], []],
    ['us', 'GPS G21', 'El 10.0° Az 307', 'L1C/A: 34.0', G, [[20,11]], []],
    ['us', 'GPS G22', 'El 32.0° Az 323', 'L1C/A: 16.0', G, [[12,3],[4,5],[1,3],[3,5]], []],
    ['us', 'GPS G23', 'El 51.0° Az 116', 'L1C/A: --, L2C: 10.0, L2C: --', B, [[4,2],[16,0]], []],
    ['us', 'GPS G25', 'El 43.0° Az 79.0', 'L1C/A: 18.0, L2C: --, L2C: --', B, [[20,4]], []],
    ['us', 'GPS G31', 'El 67.0° Az 348', 'L1C/A: 14.0, L2C: --, L2C: --', B, [[20,3]], []],
    ['us', 'GPS G32', 'El 38.0° Az 327', 'L1C/A: 48.0, L2C: 37.0', G, [[10,16],[2,17],[8,16]], [[0,20,13]]],
    ['ru', 'GLONASS R1', 'El 27.0° Az 358', 'L1: 43.0', G, [[7,15],[2,13],[3,15],[6,13],[2,15]], []],
    ['ru', 'GLONASS R11', 'El 13.0° Az 28.0', 'L1: 32.0', G, [[2,10],[7,8],[2,7],[9,10]], []],
    ['ru', 'GLONASS R12', 'El 68.0° Az 54.0', 'L1: 28.0', G, [[20,9]], []],
    ['ru', 'GLONASS R22', 'El 19.0° Az 208', 'L1: 20.0', B, [[1,5],[2,6],[17,5]], []],
    ['eu', 'Galileo E3', 'El 29.0° Az 323', 'E5b: 23.0, E1: 21.0', G, [[10,6],[9,7],[1,5]], [[6,20,7],[10,20,6]]],
    ['eu', 'Galileo E8', 'El 38.0° Az 37.0', 'E1: 42.0, E5b: 42.0', G, [[5,14],[7,13],[3,14],[5,13]], []],
    ['eu', 'Galileo E13', 'El 22.0° Az 287', 'E1: 24.0, E5b: 20.0', G, [[20,7]], [[0,20,5]]],
    ['eu', 'Galileo E24', 'El 33.0° Az 60.0', 'E1: 27.0, E5b: 18.0', G, [[20,8]], [[0,20,4],[12,14,5],[15,16,5]]],
    ['cn', 'BeiDou B8', 'El 49.0° Az 343', 'B2: 38.0, B1: 38.0', G, [[20,13]], [[0,20,9]]],
    ['cn', 'BeiDou B14', 'El 38.0° Az 89.0', 'B1: 48.0, B2: --', R, [[2,15],[9,16],[1,15],[8,16]], []],
    ['cn', 'BeiDou B19', 'El 48.0° Az 3.00', 'B2: 36.0, B1: 31.0', G, [[20,10]], []],
    ['cn', 'BeiDou B24', 'El 18.0° Az 38.0', 'B1: 38.0, B2: --', G, [[10,11],[4,12],[2,11],[4,12]], []],
    ['cn', 'BeiDou B28', 'El 78.0° Az 44.0', 'B1: 26.0', B, [[13,7],[6,8],[1,7]], []]
  ];
  const step = 12.5;
  document.getElementById('signals').innerHTML = sats.map(([flag, name, el, cn, colour, runs, levels]) => {
    let col = 0, fills = '', tops = '', grid = '';
    runs.forEach(([n, h]) => {
      if (h) {
        fills += `<rect x="${col * step}" y="${18 - h}" width="${n * step}" height="${h}" fill="${colour}"/>`;
        tops += `<rect x="${col * step}" y="${17 - h}" width="${n * step}" height="1" fill="#b8b8b8"/>`;
      }
      col += n;
    });
    levels.forEach(([a, b, h]) => { tops += `<rect x="${a * step}" y="${17 - h}" width="${(b - a) * step}" height="1" fill="#b8b8b8"/>`; });
    for (let i = 0; i <= 20; i++) grid += `<rect x="${Math.round(i * step)}" width="1" height="18" fill="#a8a8a8"/>`;
    return `<div class="sig"><div class="sig-text">${name}<br>${el}<br>${cn}</div>
      <svg class="sig-flag"><use href="#flag-${flag}"/></svg>
      <svg class="sig-plot" viewBox="0 0 251 18" shape-rendering="crispEdges">${fills}${tops}${grid}<rect width="251" height="1" fill="#a0a0a0"/><rect y="17" width="251" height="1" fill="#a0a0a0"/></svg>
      <div class="sig-unit">55<br>dB<br>0</div></div>`;
  }).join('');
</script>
</body>
</html>
